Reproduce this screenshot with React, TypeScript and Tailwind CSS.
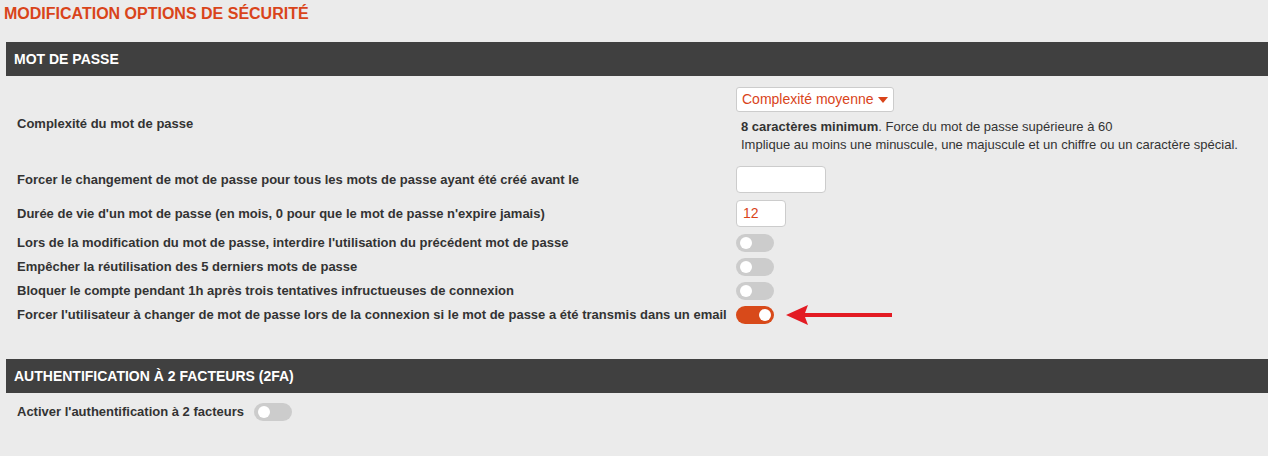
import React from "react"

const orange = "text-[#d9441a]"

function Toggle({ on = false }: { on?: boolean }) {
    return (
        <div
            className={`relative h-[18px] w-[38px] rounded-full ${on ? "bg-[#d84a1a]" : "bg-[#cccccc]"}`}
        >
            <div
                className={`absolute top-[3px] h-[12px] w-[12px] rounded-full bg-white ${on ? "left-[23px]" : "left-[4px]"}`}
            />
        </div>
    )
}

function Row({
    label,
    children,
    className = "",
    labelClassName = "",
}: {
    label: string
    children: React.ReactNode
    className?: string
    labelClassName?: string
}) {
    return (
        <div className={`flex items-center ${className}`}>
            <div className={`w-[719px] shrink-0 text-[13px] font-bold leading-[18px] text-[#333333] ${labelClassName}`}>
                {label}
            </div>
            <div>{children}</div>
        </div>
    )
}

function SectionHeader({ title }: { title: string }) {
    return (
        <div className="ml-[6px] flex h-[34px] items-center bg-[#404040] pl-[8px] text-[14px] font-bold text-white">
            {title}
        </div>
    )
}

export default function App() {
    return (
        <div className="h-[456px] w-[1268px] overflow-hidden bg-[#ebebeb] font-['Liberation_Sans',Arial,sans-serif]">
            <div className={`pl-[4px] pt-[5px] text-[16px] font-bold leading-[18px] ${orange}`}>
                MODIFICATION OPTIONS DE SÉCURITÉ
            </div>

            <div className="mt-[19px]">
                <SectionHeader title="MOT DE PASSE" />
            </div>

            <div className="pl-[17px]">
                {/* Complexité */}
                <Row label="Complexité du mot de passe" className="mt-[11px]" labelClassName="pt-[6px]">
                    <div>
                        <div className="flex h-[25px] w-[158px] items-center justify-between rounded-[3px] border border-[#cccccc] bg-white pl-[5px] pr-[5px]">
                            <span className={`text-[14px] ${orange}`}>Complexité moyenne</span>
                            <svg width="10" height="6" viewBox="0 0 10 6">
                                <path d="M0 0 L10 0 L5 6 Z" fill="#d9441a" />
                            </svg>
                        </div>
                        <div className="ml-[5px] mt-[6px] text-[13px] leading-[18px] text-[#333333]">
                            <div>
                                <span className="font-bold">8 caractères minimum</span>. Force du mot de passe supérieure à 60
                            </div>
                            <div>Implique au moins une minuscule, une majuscule et un chiffre ou un caractère spécial.</div>
                        </div>
                    </div>
                </Row>

                <Row
                    label="Forcer le changement de mot de passe pour tous les mots de passe ayant été créé avant le"
                    className="mt-[12px]"
                >
                    <div className="h-[27px] w-[90px] rounded-[4px] border border-[#cccccc] bg-white" />
                </Row>

                <Row
                    label="Durée de vie d'un mot de passe (en mois, 0 pour que le mot de passe n'expire jamais)"
                    className="mt-[7px]"
                >
                    <div className="flex h-[27px] w-[50px] items-center rounded-[4px] border border-[#cccccc] bg-white pl-[6px]">
                        <span className={`text-[14px] ${orange}`}>12</span>
                    </div>
                </Row>

                <Row
                    label="Lors de la modification du mot de passe, interdire l'utilisation du précédent mot de passe"
                    className="mt-[7px]"
                >
                    <Toggle />
                </Row>
                <Row label="Empêcher la réutilisation des 5 derniers mots de passe" className="mt-[6px]">
                    <Toggle />
                </Row>
                <Row
                    label="Bloquer le compte pendant 1h après trois tentatives infructueuses de connexion"
                    className="mt-[6px]"
                >
                    <Toggle />
                </Row>
                <Row
                    label="Forcer l'utilisateur à changer de mot de passe lors de la connexion si le mot de passe a été transmis dans un email"
                    className="mt-[6px]"
                >
                    <div className="flex h-[18px] items-center">
                        <Toggle on />
                        <svg width="110" height="22" viewBox="0 0 110 22" className="-my-[2px] ml-[12px]">
                            <path d="M0 11 L22 1 L19 9 L106 9 L106 13 L19 13 L22 21 Z" fill="#e31b23" />
                        </svg>
                    </div>
                </Row>
            </div>

            <div className="mt-[35px]">
                <SectionHeader title="AUTHENTIFICATION À 2 FACTEURS (2FA)" />
            </div>

            <div className="mt-[10px] flex items-center pl-[17px]">
                <span className="text-[13px] font-bold leading-[18px] text-[#333333]">
                    Activer l'authentification à 2 facteurs
                </span>
                <div className="ml-[10px]">
                    <Toggle />
                </div>
            </div>
        </div>
    )
}
